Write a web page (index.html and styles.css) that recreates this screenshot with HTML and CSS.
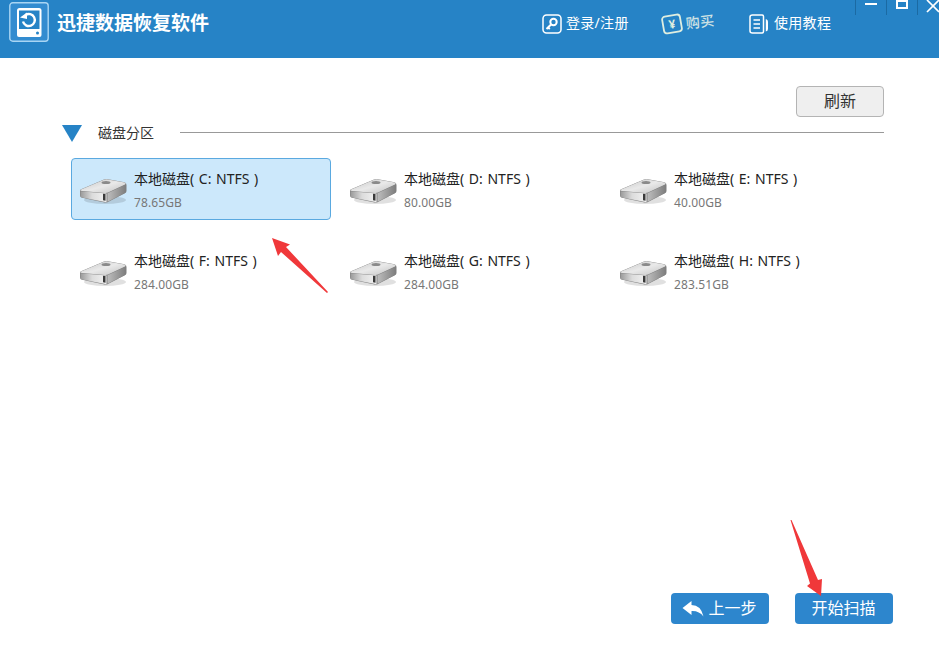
FILE: index.html
```html
<!DOCTYPE html>
<html lang="zh-CN">
<head>
<meta charset="utf-8">
<title>迅捷数据恢复软件</title>
<link rel="stylesheet" href="styles.css">
</head>
<body>
<svg class="defs" width="0" height="0" aria-hidden="true">
  <defs>
    <linearGradient id="topFace" x1="0" y1="0" x2="1" y2="1">
      <stop offset="0" stop-color="#c4c4c4"/>
      <stop offset="0.5" stop-color="#e9e9e9"/>
      <stop offset="1" stop-color="#c2c2c2"/>
    </linearGradient>
    <linearGradient id="frontFace" x1="0" y1="0" x2="1" y2="0">
      <stop offset="0" stop-color="#9a9a9a"/>
      <stop offset="0.45" stop-color="#dcdcdc"/>
      <stop offset="1" stop-color="#f2f2f2"/>
    </linearGradient>
    <linearGradient id="sideFace" x1="0" y1="0" x2="1" y2="0">
      <stop offset="0" stop-color="#bdbdbd"/>
      <stop offset="1" stop-color="#7d7d7d"/>
    </linearGradient>
    <symbol id="drive" viewBox="0 0 48 27">
      <ellipse cx="26" cy="22" rx="21" ry="4" fill="#000" opacity=".12"/>
      <path d="M1.500 11.500 L25 1.500 Q27 .8 29 1.200 L45.500 4.300 Q47.500 5 47.500 7 V13 Q47.500 14.500 46 15.300 L29 24 Q27.500 24.800 25.500 24.400 L3 19.800 Q1 19.300 1 17.300 V13 Z" fill="#808080"/>
      <path d="M1.500 11.800 L25 1.800 Q27 1.100 29 1.500 L45.500 4.600 Q47.500 5.300 46 6.500 L29 14.600 Q27.500 15.300 25.500 15 L3 13 Q.8 12.800 1.500 11.800 Z" fill="url(#topFace)"/>
      <ellipse cx="27" cy="4.500" rx="4.500" ry="1.600" fill="#8a8a8a"/>
      <path d="M1.500 13.200 L27.500 15.500 V24.200 L3 19.400 Q1.500 19 1.500 17.300 Z" fill="url(#frontFace)"/>
      <path d="M24 15.800 L26.500 16 V22.700 L24 22.200 Z" fill="#3a3a3a"/>
      <path d="M28.500 15.300 L47 6.500 V13 Q47 14.300 45.800 15 L28.500 23.800 Z" fill="url(#sideFace)"/>
    </symbol>
  </defs>
</svg>
<header class="titlebar">
  <svg class="logo" viewBox="0 0 40 40" width="40" height="40" aria-hidden="true">
    <rect x="0.800" y="0.800" width="38.400" height="38.400" rx="3" fill="#338cd0" stroke="#a9d5f3" stroke-width="1.400"/>
    <path d="M8 8.500 Q8 6 10.500 6 H30 Q32.500 6 32.500 8.500 V33 Q32.500 35 30.500 35 H10 Q8 35 8 33 Z" fill="#fff"/>
    <rect x="10" y="8.500" width="20.500" height="18.500" fill="#2683c6"/>
    <circle cx="28.500" cy="31" r="1.500" fill="#2683c6"/>
    <path d="M16.500 13 A6 6 0 1 1 14 19.500" fill="none" stroke="#fff" stroke-width="2.400"/>
    <path d="M11 15.500 L18 10.500 L18 17 Z" fill="#fff"/>
  </svg>
  <h1 class="app-name">迅捷数据恢复软件</h1>
  <nav class="nav">
    <a class="nav-item nav-login">
      <svg viewBox="0 0 20 20" width="20" height="20" aria-hidden="true">
        <rect x="1" y="1" width="18" height="18" rx="3.500" fill="none" stroke="#fff" stroke-width="1.500"/>
        <circle cx="11.500" cy="8" r="3.200" fill="none" stroke="#fff" stroke-width="2"/>
        <path d="M9 10.500 L4.500 15 M6 13.500 L7.800 15" fill="none" stroke="#fff" stroke-width="2"/>
      </svg>
      <span>登录/注册</span>
    </a>
    <a class="nav-item nav-buy">
      <svg viewBox="0 0 22 22" width="22" height="22" aria-hidden="true">
        <g transform="rotate(-10 11 11)">
          <rect x="2" y="2.500" width="18" height="17" rx="3" fill="none" stroke="#dfeee0" stroke-width="1.800"/>
          <text x="11" y="15.500" class="yen">¥</text>
        </g>
      </svg>
      <span class="buy-label">购买</span>
    </a>
    <a class="nav-item nav-help">
      <svg viewBox="0 0 20 20" width="20" height="20" aria-hidden="true">
        <path d="M3.500 1 H13 Q14.500 1 14.500 2.500 V17.500 Q14.500 19 13 19 H3.500 Q1 19 1 17 V3 Q1 1 3.500 1 Z" fill="none" stroke="#fff" stroke-width="1.500"/>
        <path d="M4.500 6 H11 M4.500 10 H11 M4.500 14 H11" stroke="#fff" stroke-width="1.400"/>
        <path d="M16.800 5 Q19 5.500 19 7.500 V15 Q19 17 16.800 17.500 Z" fill="#fff"/>
      </svg>
      <span>使用教程</span>
    </a>
  </nav>
  <div class="window-controls">
    <span class="win-btn"><i class="min"></i></span>
    <span class="win-btn"><i class="max"></i></span>
    <span class="win-btn">
      <svg viewBox="0 0 14 14" width="14" height="14" aria-hidden="true"><path d="M1 0 L13 12 M13 0 L1 12" stroke="#fff" stroke-width="1.700"/></svg>
    </span>
  </div>
</header>
<main class="content">
  <div class="toolbar"><button class="refresh">刷新</button></div>
  <div class="section-head">
    <span class="triangle"></span>
    <span class="section-title">磁盘分区</span>
    <span class="rule"></span>
  </div>
  <div class="drive-grid">
    <div class="drive selected">
      <svg class="drive-icon"><use href="#drive"/></svg>
      <div class="drive-text"><div class="drive-name">本地磁盘( C: NTFS )</div><div class="drive-size">78.65GB</div></div>
    </div>
    <div class="drive">
      <svg class="drive-icon"><use href="#drive"/></svg>
      <div class="drive-text"><div class="drive-name">本地磁盘( D: NTFS )</div><div class="drive-size">80.00GB</div></div>
    </div>
    <div class="drive">
      <svg class="drive-icon"><use href="#drive"/></svg>
      <div class="drive-text"><div class="drive-name">本地磁盘( E: NTFS )</div><div class="drive-size">40.00GB</div></div>
    </div>
    <div class="drive">
      <svg class="drive-icon"><use href="#drive"/></svg>
      <div class="drive-text"><div class="drive-name">本地磁盘( F: NTFS )</div><div class="drive-size">284.00GB</div></div>
    </div>
    <div class="drive">
      <svg class="drive-icon"><use href="#drive"/></svg>
      <div class="drive-text"><div class="drive-name">本地磁盘( G: NTFS )</div><div class="drive-size">284.00GB</div></div>
    </div>
    <div class="drive">
      <svg class="drive-icon"><use href="#drive"/></svg>
      <div class="drive-text"><div class="drive-name">本地磁盘( H: NTFS )</div><div class="drive-size">283.51GB</div></div>
    </div>
  </div>
  <div class="actions">
    <button class="action">
      <svg viewBox="0 0 22 18" width="22" height="18" aria-hidden="true"><path d="M0.500 8 L9.500 1 V5 Q19 5 21.500 16.500 Q17 10.500 9.500 11 V15 Z" fill="#fff"/></svg>
      <span>上一步</span>
    </button>
    <button class="action"><span>开始扫描</span></button>
  </div>
</main>
<svg class="annotation arrow-one" viewBox="0 0 60 60" width="60" height="60" aria-hidden="true">
  <path d="M1 1 L19 7.500 L15 10 L57 55 L56 56 L10 15 L7 19 Z" fill="#f0383a"/>
</svg>
<svg class="annotation arrow-two" viewBox="0 0 34 80" width="34" height="80" aria-hidden="true">
  <path d="M0.500 1 L1.500 1 L28 61 L32 60 L31 77 L17 67 L20 64.500 Z" fill="#f0383a"/>
</svg>
</body>
</html>
```
FILE: styles.css
```css
* { box-sizing: border-box; }
html, body { height: 100%; }
body {
  margin: 0;
  overflow: hidden;
  display: flex;
  flex-direction: column;
  position: relative;
  background: #fff;
  color: #222;
  font-family: "Noto Sans", "Noto Sans CJK SC", sans-serif;
}
.defs { position: absolute; }

.titlebar {
  flex: none;
  height: 58px;
  display: flex;
  align-items: flex-start;
  padding-left: 9px;
  background: #2683c6;
  color: #fff;
}
.logo { margin-top: 2px; flex: none; }
.app-name {
  margin: 11px 0 0 8px;
  font-size: 19px;
  line-height: 24px;
  font-weight: 700;
  white-space: nowrap;
}
.nav { display: flex; margin: 12px 0 0 333px; flex: none; }
.nav-item {
  display: flex;
  align-items: center;
  font-size: 14px;
  line-height: 22px;
  white-space: nowrap;
}
.nav-item svg { flex: none; }
.nav-item span { position: relative; top: -1px; letter-spacing: .3px; }
.nav-login { gap: 4px; width: 119px; }
.nav-buy { gap: 3px; width: 88px; margin-top: 1px; }
.nav-help { gap: 5px; width: 106px; }
.nav-item .buy-label {
  color: #cfe2e4;
  font-weight: 500;
  transform: rotate(-7deg) translateY(-1px);
}
.yen { fill: #dfeee0; font-size: 12px; font-weight: 700; text-anchor: middle; }

.window-controls { display: flex; flex: none; }
.win-btn {
  width: 31px;
  height: 15px;
  border-left: 1px solid #1b6aa3;
  display: flex;
  justify-content: center;
  overflow: hidden;
}
.min { width: 12px; height: 2px; margin-top: 3px; background: #fff; }
.max { width: 12px; height: 9px; border: 2px solid #fff; }

.content {
  flex: 1;
  display: flex;
  flex-direction: column;
  padding: 28px 46px 21px 62px;
}
.toolbar { display: flex; justify-content: flex-end; padding-right: 9px; }
.refresh {
  width: 88px;
  height: 31px;
  padding: 0 0 4px;
  border: 1px solid #b4b4b4;
  border-radius: 4px;
  background: #efefef;
  color: #333;
  font: 16px/1 "Noto Sans CJK SC", sans-serif;
}
.section-head {
  display: flex;
  align-items: center;
  margin-top: 8px;
  height: 17px;
  padding-right: 9px;
}
.triangle {
  flex: none;
  width: 0;
  height: 0;
  border-left: 10px solid transparent;
  border-right: 10px solid transparent;
  border-top: 17px solid #2683c6;
}
.section-title {
  margin: -2px 0 0 16px;
  font-size: 14px;
  line-height: 17px;
  color: #333;
  white-space: nowrap;
}
.rule { flex: 1; margin-left: 26px; height: 1px; background: #999; margin-top: -2px; }

.drive-grid {
  display: grid;
  grid-template-columns: repeat(3, 260px);
  grid-auto-rows: 62px;
  column-gap: 10px;
  row-gap: 20px;
  margin: 16px 0 0 9px;
}
.drive {
  display: flex;
  align-items: center;
  padding-left: 7px;
  border: 1px solid transparent;
  border-radius: 4px;
}
.drive.selected { background: #cce8fb; border-color: #5aa9e0; }
.drive-icon { width: 48px; height: 27px; flex: none; margin-top: 4px; }
.drive-text { margin: 2px 0 0 7px; }
.drive-name { font-size: 14px; line-height: 22px; color: #222; white-space: nowrap; word-spacing: 1px; }
.drive-size { font-size: 12px; line-height: 18px; margin-top: 4px; color: #777; letter-spacing: .1px; }

.actions {
  margin-top: auto;
  display: flex;
  justify-content: flex-end;
  gap: 26px;
}
.action {
  width: 98px;
  height: 31px;
  display: flex;
  align-items: center;
  justify-content: center;
  gap: 4px;
  border: 0;
  border-radius: 4px;
  background: #2d86cd;
  color: #fff;
  font: 16px/1 "Noto Sans CJK SC", sans-serif;
  padding: 0 1px 0 0;
}
.action span { position: relative; top: -2px; }

.annotation { position: absolute; }
.arrow-one { left: 271px; top: 237px; }
.arrow-two { left: 790px; top: 519px; }
```
